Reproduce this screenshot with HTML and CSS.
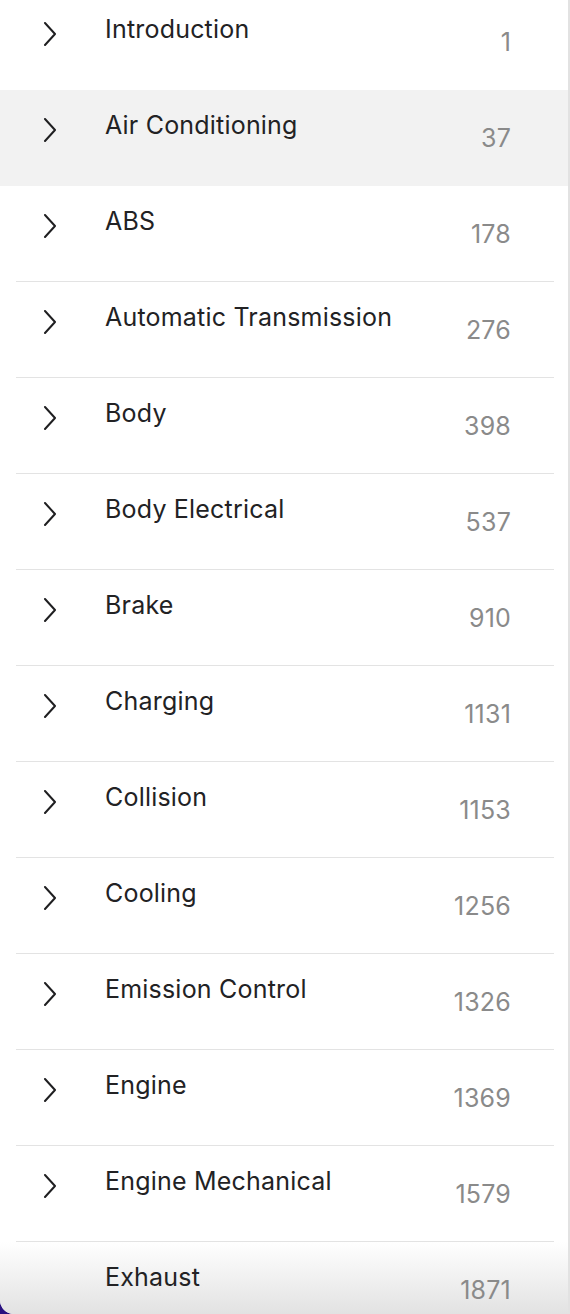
FILE: index.html
```html
<!DOCTYPE html>
<html lang="en">
<head>
  <meta charset="UTF-8">
  <title>Contents</title>
  <link rel="stylesheet" href="styles.css">
</head>
<body>
  <div class="panel">
    <div class="fade"></div>
    <ul class="toc">
      <li class="row first">
        <div class="item">
          <svg class="chev" viewBox="0 0 14 24"><polyline points="2,1 12,12 2,23"/></svg>
          <span class="title">Introduction</span>
          <span class="page">1</span>
        </div>
      </li>
      <li class="row active">
        <div class="item">
          <svg class="chev" viewBox="0 0 14 24"><polyline points="2,1 12,12 2,23"/></svg>
          <span class="title">Air Conditioning</span>
          <span class="page">37</span>
        </div>
      </li>
      <li class="row">
        <div class="item">
          <svg class="chev" viewBox="0 0 14 24"><polyline points="2,1 12,12 2,23"/></svg>
          <span class="title">ABS</span>
          <span class="page">178</span>
        </div>
      </li>
      <li class="row">
        <div class="item">
          <svg class="chev" viewBox="0 0 14 24"><polyline points="2,1 12,12 2,23"/></svg>
          <span class="title">Automatic Transmission</span>
          <span class="page">276</span>
        </div>
      </li>
      <li class="row">
        <div class="item">
          <svg class="chev" viewBox="0 0 14 24"><polyline points="2,1 12,12 2,23"/></svg>
          <span class="title">Body</span>
          <span class="page">398</span>
        </div>
      </li>
      <li class="row">
        <div class="item">
          <svg class="chev" viewBox="0 0 14 24"><polyline points="2,1 12,12 2,23"/></svg>
          <span class="title">Body Electrical</span>
          <span class="page">537</span>
        </div>
      </li>
      <li class="row">
        <div class="item">
          <svg class="chev" viewBox="0 0 14 24"><polyline points="2,1 12,12 2,23"/></svg>
          <span class="title">Brake</span>
          <span class="page">910</span>
        </div>
      </li>
      <li class="row">
        <div class="item">
          <svg class="chev" viewBox="0 0 14 24"><polyline points="2,1 12,12 2,23"/></svg>
          <span class="title">Charging</span>
          <span class="page">1131</span>
        </div>
      </li>
      <li class="row">
        <div class="item">
          <svg class="chev" viewBox="0 0 14 24"><polyline points="2,1 12,12 2,23"/></svg>
          <span class="title">Collision</span>
          <span class="page">1153</span>
        </div>
      </li>
      <li class="row">
        <div class="item">
          <svg class="chev" viewBox="0 0 14 24"><polyline points="2,1 12,12 2,23"/></svg>
          <span class="title">Cooling</span>
          <span class="page">1256</span>
        </div>
      </li>
      <li class="row">
        <div class="item">
          <svg class="chev" viewBox="0 0 14 24"><polyline points="2,1 12,12 2,23"/></svg>
          <span class="title">Emission Control</span>
          <span class="page">1326</span>
        </div>
      </li>
      <li class="row">
        <div class="item">
          <svg class="chev" viewBox="0 0 14 24"><polyline points="2,1 12,12 2,23"/></svg>
          <span class="title">Engine</span>
          <span class="page">1369</span>
        </div>
      </li>
      <li class="row">
        <div class="item">
          <svg class="chev" viewBox="0 0 14 24"><polyline points="2,1 12,12 2,23"/></svg>
          <span class="title">Engine Mechanical</span>
          <span class="page">1579</span>
        </div>
      </li>
      <li class="row">
        <div class="item">
          <span class="chev-space"></span>
          <span class="title">Exhaust</span>
          <span class="page">1871</span>
        </div>
      </li>
    </ul>
  </div>
</body>
</html>
```

FILE: styles.css
```css
html {
  background: #2a1280;
}

body {
  margin: 0;
  font-family: Inter, "Noto Sans", sans-serif;
  overflow: hidden;
}

.panel {
  position: relative;
  width: 568px;
  height: 1314px;
  background: white;
  border-right: 2px solid #e2e2e2;
  border-bottom-left-radius: 14px;
  overflow: hidden;
}

/* soft shadow at the bottom edge, behind the rows */
.fade {
  position: absolute;
  left: 0;
  right: 0;
  bottom: 0;
  height: 72px;
  background: linear-gradient(to bottom, rgba(228, 228, 228, 0), rgba(226, 226, 226, 1));
}

.toc {
  position: relative;
  list-style: none;
  margin: -6px 0 0;
  padding: 0;
}

.row {
  height: 96px;
}

.row.active {
  background: #f2f2f2;
}

.item {
  display: flex;
  align-items: flex-start;
  height: 96px;
  box-sizing: border-box;
  margin: 0 14px 0 16px;
  padding: 20px 43px 0 27px;
  border-bottom: 1px solid #e3e3e3;
}

.row.first .item,
.row.active .item {
  border-bottom-color: transparent;
}

.chev {
  width: 14px;
  height: 24px;
  margin-top: 8px;
  flex-shrink: 0;
  fill: none;
  stroke: #1f1f21;
  stroke-width: 2;
  stroke-linecap: round;
  stroke-linejoin: round;
}

.chev-space {
  width: 14px;
  flex-shrink: 0;
}

.title {
  margin-left: 48px;
  flex: 1;
  font-size: 25px;
  line-height: 30px;
  letter-spacing: 0.2px;
  color: #222224;
}

.page {
  margin-top: 13px;
  font-size: 25px;
  line-height: 30px;
  letter-spacing: 0.2px;
  color: #8a8a8a;
}
```
